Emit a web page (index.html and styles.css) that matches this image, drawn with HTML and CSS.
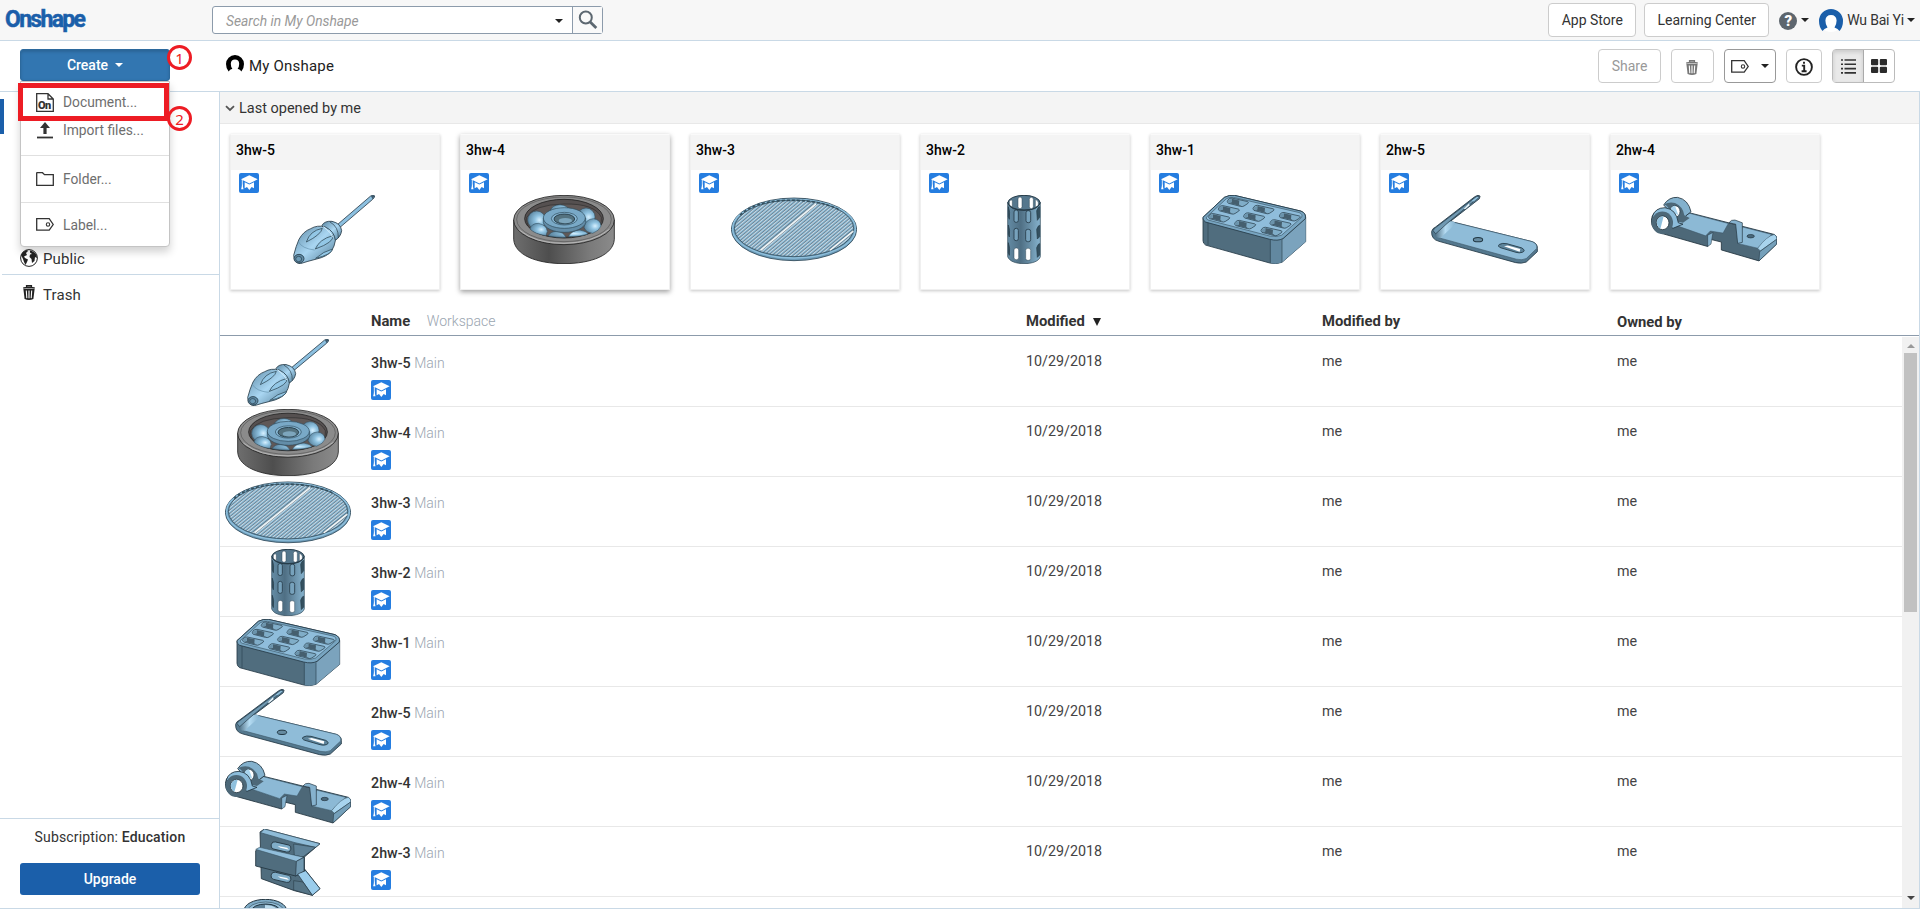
FILE: index.html
```html
<!DOCTYPE html>
<html lang="en">
<head>
<meta charset="utf-8">
<title>Onshape</title>
<link rel="stylesheet" href="styles.css">
</head>
<body>
<svg class="defs" width="0" height="0" aria-hidden="true">
  <defs>
    <linearGradient id="gDriver" x1="0" y1="0" x2="1" y2="1"><stop offset="0" stop-color="#5b87a2"/><stop offset=".5" stop-color="#a9d6f2"/><stop offset="1" stop-color="#4c7690"/></linearGradient>
    <linearGradient id="gRing"><stop offset="0" stop-color="#6e6e6e"/><stop offset=".35" stop-color="#4e4e4e"/><stop offset=".75" stop-color="#7a7a7a"/><stop offset="1" stop-color="#8b8b8b"/></linearGradient>
    <linearGradient id="gTube"><stop offset="0" stop-color="#648ca5"/><stop offset=".4" stop-color="#4f6f84"/><stop offset="1" stop-color="#86b3ce"/></linearGradient>
    <radialGradient id="gBall" cx=".65" cy=".5" r=".7"><stop offset="0" stop-color="#d6f0ff"/><stop offset=".35" stop-color="#8fc2e0"/><stop offset="1" stop-color="#527a94"/></radialGradient>
    <linearGradient id="gBend"><stop offset="0" stop-color="#4b6b80"/><stop offset=".5" stop-color="#b5dcf3"/><stop offset="1" stop-color="#84b1cd"/></linearGradient>
    <pattern id="bars" width="8" height="8" patternUnits="userSpaceOnUse" patternTransform="rotate(50)"><rect width="8" height="8" fill="#86b8d5"/><rect width="2.2" height="8" fill="#4a6375"/><rect x="2.2" width="2.4" height="8" fill="#dfe5e9"/></pattern>
  </defs>

  <symbol id="driver" viewBox="153 225 378 207" preserveAspectRatio="none">
    <path d="M352 314L452 228Q460 223 464 228Q464 233 458 238L360 322Z" fill="#8cc0e0" stroke="#2b3d4a" stroke-width="2.5"/>
    <path d="M453 229Q461 222 464 228L458 238Z" fill="#3e5a6c"/>
    <path d="M306 316Q314 302 336 304Q362 310 365 332Q362 352 344 362L322 345Z" fill="url(#gDriver)" stroke="#263a47" stroke-width="2.5"/>
    <path d="M330 306Q356 320 355 354" fill="none" stroke="#263a47" stroke-width="2"/>
    <path d="M221 406Q228 378 237 358Q250 334 272 326Q292 314 316 321Q344 334 346 362Q344 378 334 394Q320 410 290 417Q262 424 241 431Q223 430 221 406Z" fill="url(#gDriver)" stroke="#263a47" stroke-width="2.5"/>
    <path d="M259 366Q270 332 307 325Q303 344 259 366ZM286 387Q298 358 338 347Q344 366 286 387ZM287 415Q310 394 338 387Q334 404 287 415Z" fill="#93c7e6" stroke="#36505f" stroke-width="2.5"/>
    <path d="M310 320Q334 338 338 352" fill="none" stroke="#d7effc" stroke-width="3"/>
    <path d="M235 365Q246 386 284 390" fill="none" stroke="#6391ac" stroke-width="2"/>
    <ellipse cx="237" cy="416" rx="15" ry="13" fill="#5f8ba6" stroke="#243946" stroke-width="2.5"/><ellipse cx="236" cy="417" rx="9" ry="8" fill="#6c9ab6" stroke="#243946" stroke-width="2"/>
  </symbol>

  <symbol id="bearing" viewBox="843 225 378 207" preserveAspectRatio="none">
    <path d="M881 300V358C884 405 950 431 1032 431S1180 405 1183 358V300Z" fill="url(#gRing)" stroke="#222" stroke-width="2.5"/>
    <ellipse cx="1032" cy="300" rx="151" ry="74" fill="#8b8b8b" stroke="#222" stroke-width="2.5"/>
    <ellipse cx="1032" cy="298" rx="142" ry="67" fill="none" stroke="#474747" stroke-width="1.6"/>
    <ellipse cx="1032" cy="296" rx="118" ry="58" fill="#555050" stroke="#222" stroke-width="2.5"/>
    <path d="M920 292Q940 254 1032 252T1144 292Q1150 348 1032 352Q914 350 920 292Z" fill="#5f5857" stroke="#2d2d2d" stroke-width="2"/>
    <g stroke="#2d4858" stroke-width="1.5" fill="url(#gBall)"><path d="M990 272Q998 254 1020 254Q1042 256 1048 270L1020 284Z"/><circle cx="950" cy="300" r="27"/><circle cx="1098" cy="291" r="27"/><path d="M1092 322Q1096 298 1120 296Q1142 299 1143 318Q1138 332 1118 340Q1098 338 1092 322Z"/><path d="M930 327Q934 310 955 310Q980 315 982 334L978 347Q944 342 930 327Z"/><path d="M984 348Q992 334 1010 334Q1030 336 1038 352Q1008 353 984 348ZM1045 350Q1056 330 1080 330Q1100 334 1104 342Q1080 350 1045 350Z"/></g>
    <path d="M970 294V308C974 324 1000 337 1033 337S1093 324 1097 308V294Z" fill="#638da8" stroke="#2d4858" stroke-width="2"/>
    <ellipse cx="1033" cy="294" rx="63" ry="31" fill="#79a9c7" stroke="#2d4858" stroke-width="2"/>
    <ellipse cx="1033" cy="296" rx="39" ry="19" fill="#86b6d3" stroke="#2d4858" stroke-width="2"/>
    <ellipse cx="1033" cy="297" rx="31" ry="15" fill="#54727f" stroke="#1f3441" stroke-width="2.5"/>
    <ellipse cx="1036" cy="302" rx="20" ry="8" fill="#7da6bd"/>
    <path d="M898 330Q946 371 1032 370T1168 328" fill="none" stroke="#b7b7b7" stroke-width="3"/>
  </symbol>

  <symbol id="grill" viewBox="153 225 378 207" preserveAspectRatio="none">
    <ellipse cx="342" cy="328" rx="188" ry="94" fill="#6d9cb9" stroke="#2c4656" stroke-width="2.5"/>
    <ellipse cx="342" cy="326" rx="184" ry="88" fill="none" stroke="#8fc0dd" stroke-width="4"/>
    <ellipse cx="342" cy="325" rx="179" ry="85" fill="url(#bars)" stroke="#344f5f" stroke-width="2.5"/>
    <path d="M180 285Q220 248 300 242Q410 236 475 268" fill="none" stroke="#34505f" stroke-width="5" stroke-dasharray="9 6"/>
    <path d="M242 391L408 252M450 391L520 334" stroke="#f7f7f5" stroke-width="4"/>
    <path d="M237 389L403 250M446 387L517 330" stroke="#48687c" stroke-width="1.500"/>
  </symbol>

  <symbol id="tube" viewBox="843 225 378 207" preserveAspectRatio="none">
    <path d="M983 246V410C988 424 1008 431 1032 431S1077 424 1081 410V246Z" fill="url(#gTube)" stroke="#2e4655" stroke-width="2"/>
    <ellipse cx="1032" cy="248" rx="48" ry="22" fill="#55778d" stroke="#263b48" stroke-width="3"/>
    <g fill="#fff" stroke="#2e4655" stroke-width="1.5"><rect x="1014" y="231" width="12" height="35" rx="6"/><rect x="1048" y="232" width="12" height="34" rx="6"/><path d="M988 244q8-8 9 0v17l-9-6zM1066 238q9 4 9 10v8l-9 6z"/><rect x="1002" y="384" width="14" height="35" rx="6"/><rect x="1037" y="385" width="15" height="36" rx="6"/></g>
    <g fill="#77a2bc" stroke="#263b48" stroke-width="2.5"><rect x="1002" y="270" width="13" height="37" rx="6"/><rect x="1038" y="272" width="14" height="36" rx="6"/><rect x="1002" y="325" width="13" height="37" rx="6"/><rect x="1037" y="328" width="15" height="37" rx="6"/></g>
    <path d="M985 260q6 14 3 38l-3-8zM985 315q6 14 3 36l-3-8zM985 368q6 14 3 38l-3-8zM1070 272q6-14 9-12v32l-7 9zM1070 328q6-14 9-12v34l-7 7zM1070 383q6-14 9-12v34l-7 7z" fill="#33505f" stroke="#263b48" stroke-width="2"/>
    <path d="M984 250Q992 271 1032 271T1080 250" fill="none" stroke="#263b48" stroke-width="3"/>
  </symbol>

  <symbol id="block" viewBox="30 27 378 201" preserveAspectRatio="none">
    <path d="M66 92L130 34Q146 26 160 28L360 74Q374 80 374 92V163L303 223Q285 230 266 225L74 173Q66 168 66 160Z" fill="#506d7e" stroke="#263b48" stroke-width="2.5"/>
    <path d="M303 158L374 96V163L303 223Z" fill="#7ba3bd"/><path d="M268 152H303V223Q286 230 268 225Z" fill="#6288a0"/>
    <path d="M66 92L130 34Q146 26 160 28L360 74Q376 80 373 96L306 154Q290 162 266 156L74 106Q64 100 66 92Z" fill="#78a5c1" stroke="#263b48" stroke-width="2.5"/>
    <path d="M76 92L136 38Q146 32 158 34L354 78Q366 82 362 92L302 144Q290 150 268 147L82 100Q74 97 76 92Z" fill="#8fbddb" stroke="#36505f" stroke-width="1.8"/>
    <g id="pocket"><path d="M141 41Q146 35 153 36L199 46Q205 48 200 52L189 59Q184 62 178 60L142 51Q136 47 141 41Z" fill="#80adc8" stroke="#203440" stroke-width="2"/><path d="M152 38L175 43L174 55L182 60L142 50L152 48Z" fill="#455f6f"/><path d="M152 38L151 48L142 50L140 43Z" fill="#6b93ab"/></g>
    <use href="#pocket" x="-27" y="22"/><use href="#pocket" x="-56" y="45"/><use href="#pocket" x="77" y="21"/><use href="#pocket" x="49" y="43"/><use href="#pocket" x="22" y="65"/><use href="#pocket" x="156" y="42"/><use href="#pocket" x="128" y="63"/><use href="#pocket" x="101" y="85"/>
    <path d="M81 108V173M268 157V225M303 158V222" stroke="#2c4452" stroke-width="2"/>
  </symbol>

  <symbol id="bracket" viewBox="30 237 378 201" preserveAspectRatio="none">
    <path d="M62 343Q64 334 74 330L190 243Q204 234 207 241L205 248L118 314L364 373Q380 379 379 392V402L346 432Q333 438 314 434L84 372Q60 366 62 343Z" fill="#54788e" stroke="#243946" stroke-width="2.5"/>
    <path d="M85 362L131 317L364 373Q380 379 377 393L346 422Q334 428 316 424Z" fill="#8fbcd8" stroke="#3b5667" stroke-width="1.8"/>
    <path d="M72 344L116 314Q128 312 135 320L88 362Q68 362 72 344Z" fill="url(#gBend)"/>
    <path d="M66 341Q70 333 78 329L193 244L205 242L114 315L74 350Z" fill="#7099b2" stroke="#263b48" stroke-width="2"/>
    <path d="M182 254L197 243L204 243L188 256Z" fill="#8fc0dd"/>
    <path d="M158 278L174 262L176 267L163 278Z" fill="#eef8fd"/>
    <ellipse cx="201" cy="367" rx="14" ry="6.5" fill="#668ba1" stroke="#213642" stroke-width="3"/>
    <path d="M265 381Q274 376 288 379L332 391Q346 399 334 404Q325 407 315 404L270 391Q258 387 265 381Z" fill="#5d849b" stroke="#213642" stroke-width="2.5"/><path d="M279 386L290 384L328 394L326 402Z" fill="#fff"/>
  </symbol>

  <symbol id="hinge" viewBox="30 447 378 201" preserveAspectRatio="none">
    <path d="M150 500L400 562Q408 566 407 574V590L354 639L241 607V584L208 576L200 597L66 560Q30 552 31 520Q34 496 58 488L150 500Z" fill="#4d6878" stroke="#22343f" stroke-width="2.5"/>
    <path d="M100 534L145 500L262 530L246 558L208 552L194 566Z" fill="#8cb9d5" stroke="#3b5667" stroke-width="1.5"/>
    <path d="M200 564L216 556L210 590L200 597Z" fill="#86b2ce" stroke="#22343f" stroke-width="1.5"/>
    <path d="M290 588L304 540L392 562L350 602Z" fill="#8cb9d5" stroke="#3b5667" stroke-width="1.5"/>
    <path d="M350 602Q378 566 400 562Q409 568 407 576L358 610Z" fill="#a8d4ee" stroke="#3b5667" stroke-width="1.5"/><path d="M356 612L407 576V590L354 639Z" fill="#75a0ba" stroke="#22343f" stroke-width="1.5"/>
    <path d="M264 528Q270 518 282 520L304 528V585L290 588L284 532Z" fill="#86b2ce" stroke="#22343f" stroke-width="2"/>
    <path d="M68 476Q84 452 110 454Q142 460 150 496L134 508L122 524L108 518Z" fill="#83b1cd" stroke="#22343f" stroke-width="2.5"/>
    <path d="M70 474Q84 466 102 470Q126 480 130 506L146 514L126 528L108 524Q84 480 70 474Z" fill="#4d6878"/>
    <ellipse cx="102" cy="495" rx="15" ry="17" fill="#fff" stroke="#22343f" stroke-width="2"/><path d="M88 490Q92 478 102 478L112 506L100 500Z" fill="#a8d4ee"/>
    <path d="M34 510Q42 484 72 484Q106 488 112 528L126 532L96 544Z" fill="#8cbcda" stroke="#22343f" stroke-width="2.5"/>
    <ellipse cx="64" cy="528" rx="32" ry="33" fill="#4d6878"/><ellipse cx="65" cy="528" rx="19" ry="20" fill="#fff" stroke="#22343f" stroke-width="2.500"/><path d="M47 525Q52 508 68 509L58 546Q47 538 47 525Z" fill="#8fc0dd"/>
    <ellipse cx="329" cy="567" rx="11" ry="5" fill="#49687b" stroke="#22343f" stroke-width="2"/>
  </symbol>

  <symbol id="clamp" viewBox="30 657 378 201" preserveAspectRatio="none">
    <path d="M135 666L148 657L315 701L267 742V775L315 836L292 856L238 842L139 806Z" fill="#506d7e" stroke="#22343f" stroke-width="2.5"/>
    <path d="M137 668L148 657L315 701L302 712L240 698Z" fill="#8fbcd8" stroke="#36505f" stroke-width="2"/>
    <path d="M236 702L302 712L262 742L238 738Z" fill="#5f8298" stroke="#22343f" stroke-width="1.5"/>
    <path d="M122 722L132 714L268 742V784L242 798L122 768Z" fill="#506d7e" stroke="#22343f" stroke-width="2.5"/>
    <path d="M122 718L134 712L266 742L244 754Z" fill="#91bedb" stroke="#36505f" stroke-width="1.5"/><path d="M244 754L267 742V784L242 798Z" fill="#7199b1" stroke="#22343f" stroke-width="2"/>
    <path d="M248 792L272 782L315 836L292 856Z" fill="#9bcdec" stroke="#22343f" stroke-width="2"/>
    <path d="M236 812L264 816L292 856L236 840Z" fill="#567587" stroke="#22343f" stroke-width="1.5"/>
    <g fill="#80adc8" stroke="#22343f" stroke-width="2.5"><rect x="168" y="700" width="60" height="22" rx="10" transform="rotate(13 198 711)"/><rect x="168" y="791" width="60" height="22" rx="10" transform="rotate(13 198 802)"/></g>
    <path d="M188 708L216 713L222 719L196 713ZM188 799L216 804L222 810L196 804Z" fill="#fff"/>
  </symbol>

  <symbol id="cup" viewBox="30 867 378 201" preserveAspectRatio="none">
    <ellipse cx="151" cy="902" rx="64" ry="34" fill="#7fabc6" stroke="#22343f" stroke-width="3"/><ellipse cx="152" cy="903" rx="54" ry="27" fill="#95bfd9" stroke="#36505f" stroke-width="2"/><ellipse cx="152" cy="902" rx="42" ry="20" fill="#5b7f96" stroke="#22343f" stroke-width="3"/><path d="M150 885Q182 886 190 902H150Z" fill="#b9daed"/>
  </symbol>

  <symbol id="edu" viewBox="0 0 60 60">
    <rect width="60" height="60" rx="6" fill="#257de0"/>
    <path d="M6 19L31 7L56 19L31 31.500Z" fill="#fff"/><path d="M17 27.500L31 34.500L45 27.500V46L38 42L31 51L24 42L17 46Z" fill="#fff"/><path d="M10 20V40" stroke="#fff" stroke-width="2.500"/><path d="M10 32L13.500 49H6.500Z" fill="#fff"/>
  </symbol>
  <symbol id="trash" viewBox="0 0 14 16">
    <path d="M1.2 3.6Q7 1.8 12.8 3.6M4.6 2.6V1.1H9.4V2.6" fill="none" stroke="currentColor" stroke-width="1.4"/><path d="M1.4 4.6Q7 3.4 12.6 4.6L11.4 14.6Q7 16.6 2.6 14.6Z" fill="currentColor"/><path d="M4.3 6L4.8 13.6M7 6V13.8M9.7 6L9.2 13.6" stroke="#fff" stroke-width="1.1"/>
  </symbol>
  <symbol id="tag" viewBox="0 0 18 13">
    <path d="M.7.7H13.2L17.2 6.5L13.2 12.2H.7Z" fill="none" stroke="#333" stroke-width="1.3"/><circle cx="12" cy="6.5" r="1.7" fill="none" stroke="#333" stroke-width="1.1"/>
  </symbol>
  <symbol id="person" viewBox="0 0 24 24">
    <path d="M0 12A12 12 0 0 1 24 12Q24 18 20.5 22Q19 19.5 15.5 18.4Q17.6 15.500 17.6 11.500Q17.200 6 12 6T6.400 11.500Q6.400 15.500 8.500 18.400Q5 19.500 3.500 22Q0 18 0 12Z" fill="currentColor"/>
  </symbol>
</svg>

<header class="topbar">
  <div class="logo">Onshape</div>
  <div class="search">
    <div class="search-field"><span>Search in My Onshape</span><i class="caret"></i></div>
    <div class="search-go"><svg width="20" height="20" viewBox="0 0 20 20"><circle cx="7.800" cy="7.500" r="6" fill="none" stroke="#5c6770" stroke-width="2"/><path d="M12.200 12L18.300 18" stroke="#5c6770" stroke-width="2.800"/></svg></div>
  </div>
  <div class="account">
    <div class="btn app-store">App Store</div>
    <div class="btn learning">Learning Center</div>
    <span class="help">?</span><i class="caret"></i>
    <svg class="avatar" width="24" height="24"><circle cx="12" cy="12" r="11" fill="#fff"/><use href="#person"/></svg>
    <span class="user">Wu Bai Yi</span><i class="caret"></i>
  </div>
</header>

<div class="toolbar">
  <div class="create-area">
    <div class="create"><span>Create</span><i class="caret"></i></div>
    <div class="menu">
      <div class="item first"><svg width="18" height="19" viewBox="0 0 18 19"><path d="M.7.700H12L17.300 6V18.300H.700Z M12 .700V6H17.300" fill="none" stroke="#333" stroke-width="1.300"/><text x="2" y="16" class="on-mark">On</text></svg><span>Document...</span></div>
      <div class="item second"><svg width="18" height="18" viewBox="0 0 18 18"><path d="M9 1L14 7H10.600V13H7.400V7H4Z" fill="#333"/><path d="M1 16.500H17" stroke="#333" stroke-width="1.800"/></svg><span>Import files...</span></div>
      <div class="item folder"><svg width="18" height="14" viewBox="0 0 18 14"><path d="M.7 1.200Q.7.700 1.200.700H6.500L8.500 2.700H17.300V13.300H.700Z" fill="none" stroke="#333" stroke-width="1.300"/></svg><span>Folder...</span></div>
      <div class="item label"><svg width="18" height="13"><use href="#tag"/></svg><span>Label...</span></div>
    </div>
    <div class="highlight"></div>
    <div class="step step-1">1</div>
    <div class="step step-2">2</div>
  </div>
  <div class="place"><svg width="18" height="18"><use href="#person"/></svg><span>My Onshape</span></div>
  <div class="tools">
    <div class="btn share">Share</div>
    <div class="btn trash"><svg width="14" height="17"><use href="#trash"/></svg></div>
    <div class="btn tagger"><svg width="18" height="13"><use href="#tag"/></svg><i class="caret"></i></div>
    <div class="btn info"><svg width="18" height="18" viewBox="0 0 18 18"><circle cx="9" cy="9" r="7.900" fill="none" stroke="#222" stroke-width="1.900"/><path d="M9 3.800V5.800M6.800 7.600H9.200V13M6.600 13.200H11.600" fill="none" stroke="#222" stroke-width="1.900"/></svg></div>
    <div class="view">
      <div class="list"><svg width="15" height="15" viewBox="0 0 15 15"><path d="M0 1H2M3.500 1H15M0 5.300H2M3.500 5.300H15M0 9.600H2M3.500 9.600H15M0 13.900H2M3.500 13.900H15" stroke="#333" stroke-width="1.600"/></svg></div>
      <div class="grid"><svg width="16" height="14" viewBox="0 0 16 14"><g fill="#2b2b2b"><rect width="7.200" height="6.300" rx="1"/><rect x="8.800" width="7.200" height="6.300" rx="1"/><rect y="7.700" width="7.200" height="6.300" rx="1"/><rect x="8.800" y="7.700" width="7.200" height="6.300" rx="1"/></g></svg></div>
    </div>
  </div>
</div>

<div class="body">
  <aside class="sidebar">
    <i class="selected"></i><i class="sliver one"></i><i class="sliver two"></i>
    <nav class="nav">
      <div class="nav-item public"><svg width="18" height="18" viewBox="0 0 18 18"><circle cx="9" cy="9" r="8.400" fill="#fff" stroke="#222" stroke-width="1"/><path d="M1 6Q3 2 7 1L8 2L6 4L7 6L4 7.500L5 9L8 10.500L7 13L5.500 16L4 13L3 10ZM10 1.500Q14 2 16.500 6L17 9L15 8L14.500 12L12 14L11.500 10L9.500 8L10 5.500L12 5L10 3.500Z" fill="#222"/></svg><span>Public</span></div>
      <div class="nav-item bin"><svg width="14" height="17"><use href="#trash"/></svg><span>Trash</span></div>
    </nav>
    <div class="plan">
      <div class="plan-text">Subscription: <b>Education</b></div>
      <div class="upgrade">Upgrade</div>
    </div>
  </aside>

  <main class="main">
    <div class="section"><svg width="10" height="7" viewBox="0 0 10 7"><path d="M1 1.200L5 5L9 1.200" fill="none" stroke="#555" stroke-width="1.800"/></svg><span>Last opened by me</span></div>
    <div class="cards">
      <div class="card"><h3>3hw-5</h3><svg class="badge"><use href="#edu"/></svg><svg class="thumb"><use href="#driver"/></svg></div>
      <div class="card hover"><h3>3hw-4</h3><svg class="badge"><use href="#edu"/></svg><svg class="thumb"><use href="#bearing"/></svg></div>
      <div class="card"><h3>3hw-3</h3><svg class="badge"><use href="#edu"/></svg><svg class="thumb"><use href="#grill"/></svg></div>
      <div class="card"><h3>3hw-2</h3><svg class="badge"><use href="#edu"/></svg><svg class="thumb"><use href="#tube"/></svg></div>
      <div class="card"><h3>3hw-1</h3><svg class="badge"><use href="#edu"/></svg><svg class="thumb"><use href="#block"/></svg></div>
      <div class="card"><h3>2hw-5</h3><svg class="badge"><use href="#edu"/></svg><svg class="thumb"><use href="#bracket"/></svg></div>
      <div class="card"><h3>2hw-4</h3><svg class="badge"><use href="#edu"/></svg><svg class="thumb"><use href="#hinge"/></svg></div>
    </div>
    <div class="head cols"><span></span><span class="h-name">Name <em>Workspace</em></span><span>Modified<i class="sort"></i></span><span>Modified by</span><span class="h-owner">Owned by</span></div>
    <div class="table">
      <div class="rows">
        <div class="row cols"><svg class="thumb"><use href="#driver"/></svg><div class="name"><div><b>3hw-5</b> <em>Main</em></div><svg class="badge"><use href="#edu"/></svg></div><span>10/29/2018</span><span>me</span><span>me</span></div>
        <div class="row cols"><svg class="thumb"><use href="#bearing"/></svg><div class="name"><div><b>3hw-4</b> <em>Main</em></div><svg class="badge"><use href="#edu"/></svg></div><span>10/29/2018</span><span>me</span><span>me</span></div>
        <div class="row cols"><svg class="thumb"><use href="#grill"/></svg><div class="name"><div><b>3hw-3</b> <em>Main</em></div><svg class="badge"><use href="#edu"/></svg></div><span>10/29/2018</span><span>me</span><span>me</span></div>
        <div class="row cols"><svg class="thumb"><use href="#tube"/></svg><div class="name"><div><b>3hw-2</b> <em>Main</em></div><svg class="badge"><use href="#edu"/></svg></div><span>10/29/2018</span><span>me</span><span>me</span></div>
        <div class="row cols"><svg class="thumb"><use href="#block"/></svg><div class="name"><div><b>3hw-1</b> <em>Main</em></div><svg class="badge"><use href="#edu"/></svg></div><span>10/29/2018</span><span>me</span><span>me</span></div>
        <div class="row cols"><svg class="thumb"><use href="#bracket"/></svg><div class="name"><div><b>2hw-5</b> <em>Main</em></div><svg class="badge"><use href="#edu"/></svg></div><span>10/29/2018</span><span>me</span><span>me</span></div>
        <div class="row cols"><svg class="thumb"><use href="#hinge"/></svg><div class="name"><div><b>2hw-4</b> <em>Main</em></div><svg class="badge"><use href="#edu"/></svg></div><span>10/29/2018</span><span>me</span><span>me</span></div>
        <div class="row cols"><svg class="thumb"><use href="#clamp"/></svg><div class="name"><div><b>2hw-3</b> <em>Main</em></div><svg class="badge"><use href="#edu"/></svg></div><span>10/29/2018</span><span>me</span><span>me</span></div>
        <div class="row cols"><svg class="thumb"><use href="#cup"/></svg></div>
      </div>
      <div class="scroll"><i class="up"></i><div class="grip"></div><i class="down"></i></div>
    </div>
  </main>
</div>
</body>
</html>
```
FILE: styles.css
```css
* { box-sizing: border-box; }
body {
  margin: 0;
  height: 910px;
  overflow: hidden;
  display: flex;
  flex-direction: column;
  background: #fff;
  color: #333;
  font: 15px/20px Roboto, "Liberation Sans", sans-serif;
}
svg { display: block; flex: none; }
.defs { position: absolute; }
em { font-style: normal; }
.caret {
  flex: none;
  width: 0;
  height: 0;
  border: 4px solid transparent;
  border-top-color: #222;
  border-bottom: 0;
}

/* Top bar */
.topbar {
  flex: none;
  display: flex;
  height: 41px;
  background: #f7f7f7;
  border-bottom: 1px solid #c9d9e6;
}
.logo {
  width: 212px;
  padding: 8px 0 0 5px;
  color: #1b5faa;
  font-size: 23px;
  font-weight: 700;
  line-height: 24px;
  letter-spacing: -1.7px;
  -webkit-text-stroke: .5px #1b5faa;
}
.search {
  display: flex;
  width: 391px;
  height: 28px;
  margin-top: 6px;
  background: #fff;
  border: 1px solid #8c9bab;
  border-radius: 3px;
}
.search-field {
  flex: 1;
  display: flex;
  align-items: center;
  justify-content: space-between;
  padding: 2px 9px 0 13px;
  color: #999;
  font-size: 13.800px;
  font-style: italic;
}
.search-go {
  width: 30px;
  padding: 3px 0 0 5px;
  background: #f9f9f9;
  border-left: 1px solid #8c9bab;
}
.account {
  flex: 1;
  display: flex;
  align-items: center;
  justify-content: flex-end;
  padding-right: 5px;
  font-size: 14px;
}
.btn {
  display: flex;
  align-items: center;
  justify-content: center;
  height: 34px;
  background: #fff;
  border: 1px solid #ccc;
  border-radius: 4px;
}
.app-store { width: 88px; margin: 0 8px 1px 0; }
.learning { width: 125px; margin: 0 10px 1px 0; }
.help {
  width: 18px;
  height: 18px;
  margin: 2px 4px 0 0;
  border-radius: 50%;
  background: #5d666e;
  color: #fff;
  font-weight: 900;
  font-size: 15px;
  line-height: 18px;
  text-align: center;
}
.avatar { margin: 1px 4px 0 10px; color: #1b5faa; }
.user { margin-right: 3px; letter-spacing: -.2px; }

/* Toolbar */
.toolbar {
  flex: none;
  display: flex;
  height: 51px;
  padding: 8px 25px 0 20px;
  border-bottom: 1px solid #c9d9e6;
}
.create-area { position: relative; z-index: 2; width: 206px; }
.create {
  display: flex;
  align-items: center;
  justify-content: center;
  gap: 7px;
  width: 150px;
  height: 32px;
  background: #3276b1;
  border: 1px solid #2c699d;
  border-radius: 3px;
  box-shadow: inset 0 2px 3px rgba(0, 0, 0, .15);
  color: #fff;
  font-size: 14px;
  font-weight: 500;
}
.create .caret { border-top-color: #fff; }
.menu {
  position: absolute;
  left: 0;
  top: 32px;
  width: 150px;
  height: 166px;
  background: #fff;
  border: 1px solid #c4c4c4;
  border-radius: 0 0 4px 4px;
  box-shadow: 0 5px 9px rgba(0, 0, 0, .18);
  color: #6e6e6e;
  font-size: 13.800px;
}
.item { display: flex; align-items: center; gap: 9px; padding-left: 15px; }
.item.first { height: 40px; }
.item.second { height: 33px; padding-bottom: 17px; }
.item.folder { height: 48px; border: 1px solid #e0e0e0; border-width: 1px 0; }
.item.label { height: 43px; }
.on-mark { font: 900 11px Roboto, sans-serif; fill: #333; letter-spacing: -.5px; }
.highlight {
  position: absolute;
  left: -2px;
  top: 34px;
  width: 151px;
  height: 38px;
  border: 5px solid #ed1c24;
}
.step {
  position: absolute;
  left: 147px;
  width: 25px;
  height: 25px;
  border: 3px solid #ed1c24;
  border-radius: 50%;
  color: #ed1c24;
  font: 15px/20px "Noto Sans", sans-serif;
  text-align: center;
}
.step-1 { top: -4px; }
.step-2 { top: 57px; }
.place { display: flex; gap: 5px; width: 300px; padding-top: 6px; color: #222; letter-spacing: .2px; }
.place svg { color: #000; }
.place span { padding-top: 1px; }
.tools { flex: 1; display: flex; justify-content: flex-end; gap: 10px; }
.share { width: 63px; color: #999; font-size: 14px; }
.trash { width: 43px; color: #777; padding: 2px 2px 0 0; }
.tagger { width: 52px; gap: 12px; border-color: #999; }
.info { width: 36px; padding-top: 2px; }
.view { display: flex; height: 34px; border: 1px solid #bbb; border-radius: 4px; }
.view > div { display: flex; align-items: center; justify-content: center; width: 31px; }
.view .grid { width: 30px; }
.view .list { background: #e9e9e9; border-right: 1px solid #aaa; box-shadow: inset 0 2px 4px rgba(0, 0, 0, .14); }

/* Sidebar */
.body { flex: none; display: flex; height: 817px; border-bottom: 1px solid #c9d9e6; }
.sidebar {
  position: relative;
  display: flex;
  flex-direction: column;
  justify-content: space-between;
  width: 220px;
  border-right: 1px solid #c9d9e6;
}
.selected { position: absolute; left: 0; top: 7px; width: 4px; height: 35px; background: #1b5faa; }
.sliver { position: absolute; left: 20px; width: 1px; height: 18px; background: #000; }
.sliver.one { top: 86px; }
.sliver.two { top: 121px; }
.nav { padding: 151px 0 0 2px; }
.nav-item { display: flex; align-items: center; gap: 5px; padding-left: 18px; letter-spacing: .1px; }
.nav-item.public { height: 32px; padding-bottom: 1px; border-bottom: 1px solid #c9d9e6; }
.nav-item.public span { padding-top: 2px; }
.nav-item.bin { height: 39px; gap: 7px; padding-left: 20px; }
.nav-item.bin svg { margin-bottom: 4px; color: #222; }
.plan { padding: 8px 19px 13px 20px; border-top: 1px solid #c9d9e6; font-size: 14px; text-align: center; }
.plan-text { letter-spacing: .15px; }
.plan b { font-weight: 500; }
.upgrade {
  margin-top: 16px;
  height: 32px;
  border-radius: 3px;
  background: #1b5faa;
  color: #fff;
  font-weight: 500;
  line-height: 32px;
}

/* Recent documents */
.main { flex: 1; display: flex; flex-direction: column; border-right: 1px solid #c9d9e6; }
.section {
  flex: none;
  display: flex;
  align-items: center;
  gap: 4px;
  height: 32px;
  padding: 2px 0 0 5px;
  background: #f4f4f4;
  border-bottom: 1px solid #e8e8e8;
  font-size: 14.500px;
}
.cards { flex: none; display: flex; gap: 20px; padding: 10px; height: 184px; }
.card {
  display: grid;
  grid-template: 35px 25px 1fr / 1fr;
  width: 210px;
  height: 156px;
  border: 1px solid #f0f0f0;
  border-top-color: #fafafa;
  box-shadow: 0 1px 3px rgba(0, 0, 0, .22);
}
.card.hover { box-shadow: 0 2px 5px rgba(0, 0, 0, .38); }
.card h3 {
  margin: 0;
  padding: 5px;
  background: #f4f4f4;
  color: #000;
  font-size: 14px;
  font-weight: 500;
}
.card .badge { margin: 3px 0 0 8px; }
.badge { width: 20px; height: 20px; }
.thumb { width: 126px; height: 67px; }
.card .thumb { width: 126px; height: 69px; margin-left: 40px; }

/* Document table */
.cols { display: grid; grid-template-columns: 151px 655px 296px 295px 1fr; }
.head {
  flex: none;
  height: 28px;
  padding-top: 3px;
  border-bottom: 1px solid #8c9bab;
  font-size: 14.800px;
  font-weight: 700;
}
.h-name em { margin-left: 13px; }
.head em, .name em { color: #9aa5b0; font-weight: 300; }
.head em { font-size: 14px; }
.h-owner { padding-top: 1px; }
.sort {
  display: inline-block;
  margin-left: 8px;
  border: 4.500px solid transparent;
  border-top: 8px solid #222;
  border-bottom: 0;
}
.table { flex: 1; display: flex; min-height: 0; padding-top: 1px; overflow: hidden; }
.rows { flex: 1; overflow: hidden; }
.row { height: 70px; border-bottom: 1px solid #e8e8e8; font-size: 14.300px; }
.row .thumb { margin: 2px 0 0 5px; }
.row > span { padding-top: 14px; color: #444; }
.name { padding-top: 16px; }
.name b { font-weight: 500; font-size: 14.300px; }
.name em { font-size: 14px; }
.name .badge { margin-top: 7px; }
.scroll {
  display: flex;
  flex-direction: column;
  align-items: center;
  width: 17px;
  background: #f1f1f1;
}
.scroll .up { margin-top: 7px; border: 4px solid transparent; border-bottom-color: #999; border-top: 0; }
.scroll .grip { width: 13px; height: 259px; margin-top: 5px; background: #c1c1c1; }
.scroll .down { margin: auto 0 8px; border: 4px solid transparent; border-top-color: #444; border-bottom: 0; }
```
